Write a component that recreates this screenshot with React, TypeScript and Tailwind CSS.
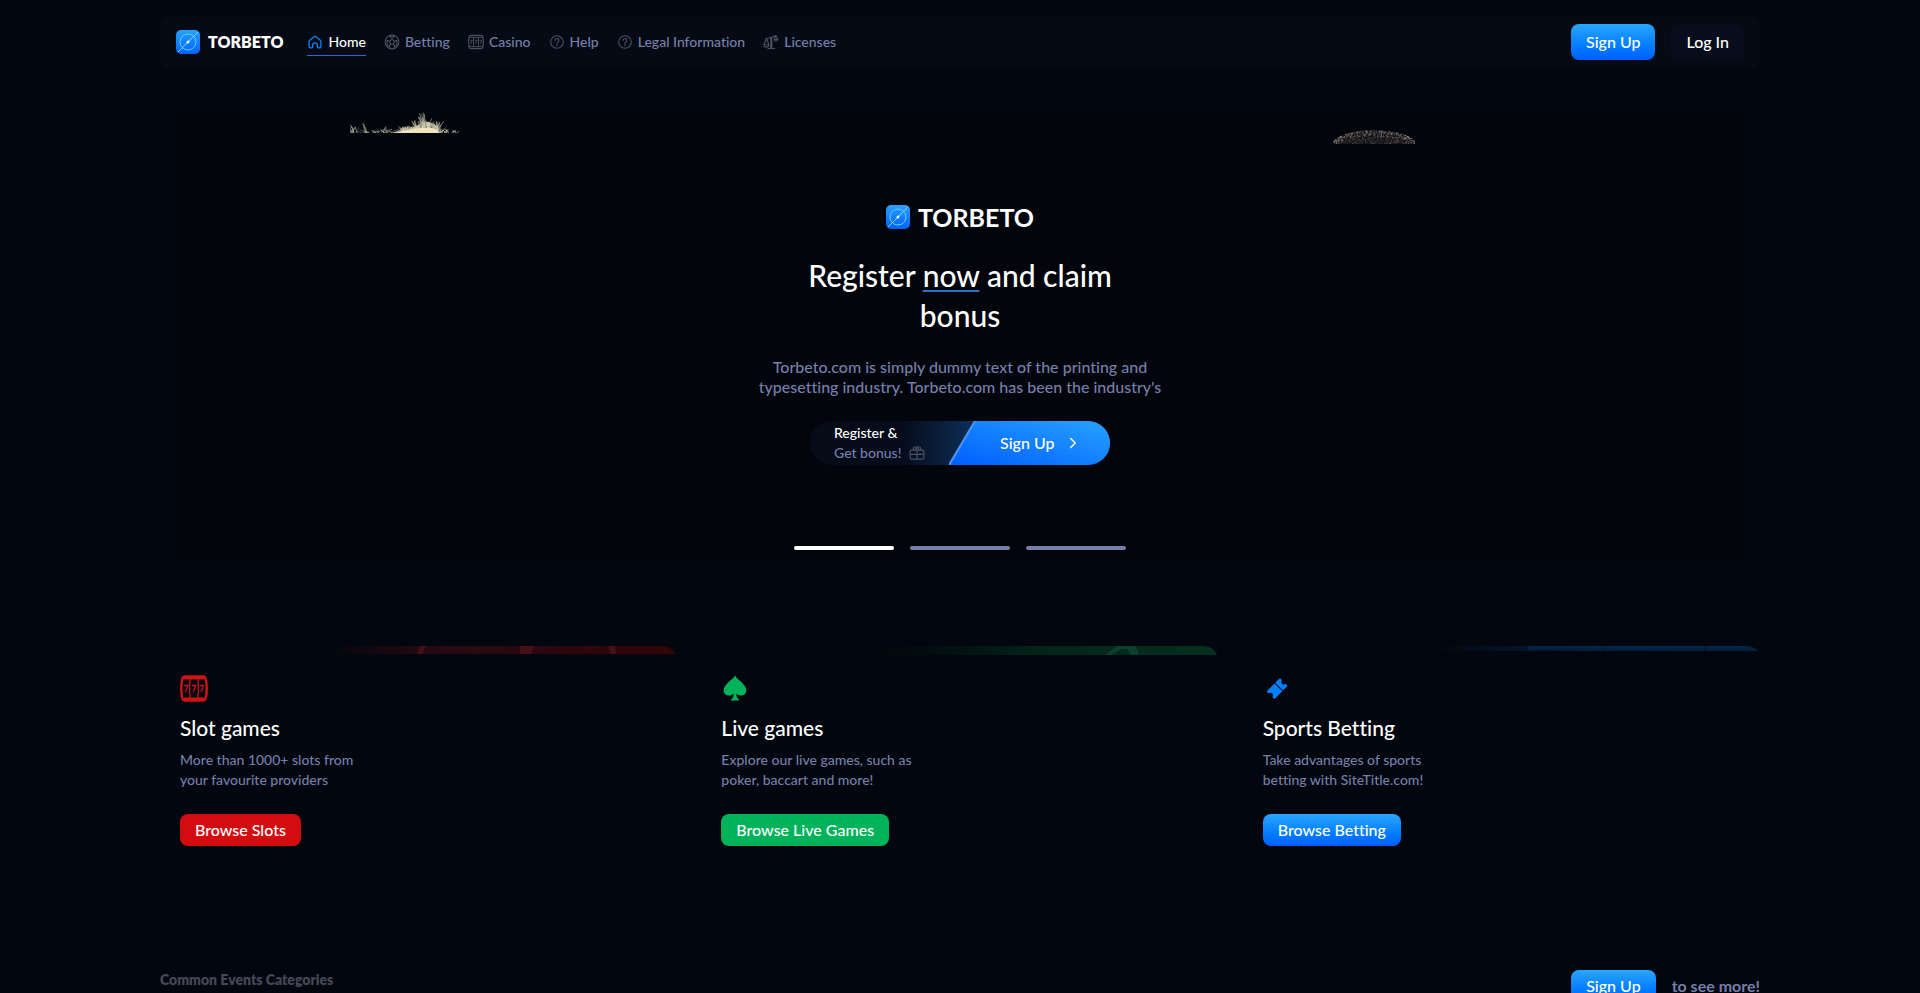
import React, { useState } from "react";
import { ChevronRight } from "lucide-react";

const NAV_ITEMS = [
    { label: "Home", icon: HomeIcon },
    { label: "Betting", icon: BallIcon },
    { label: "Casino", icon: SlotsIcon },
    { label: "Help", icon: HelpIcon },
    { label: "Legal Information", icon: HelpIcon },
    { label: "Licenses", icon: ScaleIcon },
];

const CARDS = [
    {
        title: "Slot games",
        lines: ["More than 1000+ slots from", "your favourite providers"],
        action: "Browse Slots",
        button: "bg-[#d30c10]",
        icon: SlotsBigIcon,
        strip: RedStrip,
    },
    {
        title: "Live games",
        lines: ["Explore our live games, such as", "poker, baccart and more!"],
        action: "Browse Live Games",
        button: "bg-[#00b25a]",
        icon: SpadeIcon,
        strip: GreenStrip,
    },
    {
        title: "Sports Betting",
        lines: ["Take advantages of sports", "betting with SiteTitle.com!"],
        action: "Browse Betting",
        button: "bg-linear-to-b from-[#2aa5ff] to-[#005eff]",
        icon: TicketIcon,
        strip: BlueStrip,
    },
];

function HomeIcon() {
    return (
        <svg width="16" height="16" viewBox="0 0 16 16" fill="none" stroke="#0f83f5" strokeWidth="1.3" strokeLinejoin="round">
            <path d="M2.7 6.3 7 2.7a1.6 1.6 0 0 1 2 0l4.3 3.6c.4.3.6.8.6 1.3v5a1.2 1.2 0 0 1-1.2 1.2h-1.5a.8.8 0 0 1-.8-.8v-1.8a2.4 2.4 0 0 0-4.8 0V13a.8.8 0 0 1-.8.8H3.3a1.2 1.2 0 0 1-1.2-1.2v-5c0-.5.2-1 .6-1.3z" />
        </svg>
    );
}

function BallIcon() {
    return (
        <svg width="16" height="16" viewBox="0 0 16 16" fill="none" stroke="#4b5060" strokeWidth="1.1" strokeLinejoin="round">
            <circle cx="8" cy="8" r="6.9" />
            <path d="M8 5.4 10.5 7.2 9.6 10.2H6.4L5.5 7.2zM8 5.4V3.5M10.5 7.2l2-.7M9.6 10.2l1.3 1.9M6.4 10.2l-1.3 1.9M5.5 7.2l-2-.7M5.2 1.9 8 3.5l2.8-1.6M14.5 6l-2 .5.5 4.500M1.500 6l2 .5L3 11M3 11.800l2.100.3 1.300 2.300M13 11.800l-2.100.3-1.300 2.300" />
        </svg>
    );
}

function SlotsIcon() {
    return (
        <svg width="16" height="16" viewBox="0 0 16 16" fill="none" stroke="#4b5060" strokeWidth="1.2" strokeLinejoin="round">
            <path d="M3 1.300h10c1.200 0 1.700.6 1.900 1.700.5 3.300.5 6.700 0 10-.2 1.100-.7 1.700-1.900 1.700H3c-1.200 0-1.700-.6-1.900-1.700-.5-3.300-.5-6.700 0-10 .2-1.100.7-1.700 1.900-1.700z" />
            <path d="M1 3.300h14M1 12.700h14M5.600 3.300v9.400M10.400 3.300v9.400" strokeWidth="1" />
            <path d="M2.300 6.300h2L3 9.800M7 6.300h2L7.700 9.800M11.700 6.300h2l-1.300 3.500" strokeWidth="0.900" />
        </svg>
    );
}

function HelpIcon() {
    return (
        <svg width="16" height="16" viewBox="0 0 16 16" fill="none" stroke="#4b5060" strokeWidth="1.1" strokeLinecap="round">
            <circle cx="8" cy="8" r="6.3" />
            <path d="M6.100 6.400a1.900 1.900 0 1 1 2.900 1.600c-.7.4-1 .7-1 1.300" />
            <circle cx="8" cy="11.200" r="0.300" />
        </svg>
    );
}

function ScaleIcon() {
    return (
        <svg width="16" height="16" viewBox="0 0 16 16" fill="none" stroke="#4b5060" strokeWidth="1.1" strokeLinecap="round" strokeLinejoin="round">
            <path d="M3 4.500c2.500.3 3.500-.8 4.600-1.100s3 .2 5-1.900M7.800 3.500v10.300M8.800 3.500v10.300M5 14.500h6.600M3.500 4.500.9 10.800h5zM.9 10.800c0 1.500 1 2.300 2.500 2.300s2.500-.8 2.500-2.300M13 1.500l-1.800 4h3.600zM11.200 5.500c0 1 .8 1.500 1.800 1.500s1.800-.5 1.800-1.500" />
        </svg>
    );
}

function SlotsBigIcon() {
    return (
        <svg width="28" height="28" viewBox="0 0 28 28" fill="none" stroke="#cf1417">
            <path d="M5 2.500h18c1.400 0 2.200.7 2.600 2 1.400 6 1.400 14 0 20-.4 1.300-1.200 2-2.600 2H5c-1.400 0-2.200-.7-2.600-2-1.400-6-1.400-14 0-20 .4-1.300 1.200-2 2.600-2z" strokeWidth="2.4" strokeLinejoin="round" />
            <path d="M3.500 4h21M3.500 25h21" strokeWidth="2.8" />
            <path d="M10.300 5c-.8 3-.8 16 0 19M17.700 5c.8 3 .8 16 0 19" strokeWidth="1.3" />
            <path d="M4.300 11.500h3.600L5.300 18M12 11.500h3.800L13.200 18M20 11.500h3.600L21 18" strokeWidth="1.3" />
        </svg>
    );
}

function SpadeIcon() {
    return (
        <svg width="28" height="28" viewBox="0 0 28 28" fill="#00b25a">
            <path d="M14 1.500c1.800 4.200 11.300 8.500 11.300 14.800 0 3.300-2.500 5.300-5.400 5.300-1.900 0-3.500-.8-4.500-2.100 0 3 .7 5.300 2.700 6.100v.9H9.900v-.9c2-.8 2.700-3.100 2.700-6.100-1 1.300-2.600 2.100-4.500 2.100-2.900 0-5.400-2-5.400-5.300C2.700 10 12.200 5.700 14 1.500z" />
        </svg>
    );
}

function TicketIcon() {
    return (
        <svg width="28" height="28" viewBox="0 0 28 28">
            <g transform="rotate(-45 14 14)" fill="#0080ff">
                <path d="M5.200 9H15.500V20H5.200a1 1 0 0 1-1-1v-2a2.500 2.500 0 0 0 0-5v-2a1 1 0 0 1 1-1z" />
                <path d="M16.500 9h5.600a1 1 0 0 1 1 1v2a2.500 2.500 0 0 0 0 5v2a1 1 0 0 1-1 1h-5.600z" />
            </g>
        </svg>
    );
}

function GiftIcon() {
    return (
        <svg width="16" height="16" viewBox="0 0 16 16" fill="none" stroke="#4b5060" strokeWidth="1.2" strokeLinejoin="round">
            <rect x="1.200" y="5.200" width="13.600" height="9" rx="1.200" />
            <path d="M1.200 9.400h13.600M8 5.200v9M4.300 5.200V3.500a1.500 1.500 0 0 1 1.500-1.500h4.400a1.500 1.500 0 0 1 1.500 1.500v1.700M6.400 5.200V4L8 2.500 9.600 4v1.200" />
        </svg>
    );
}

function LogoMark() {
    return (
        <svg width="24" height="24" viewBox="0 0 24 24" fill="none">
            <defs>
                <linearGradient id="mark" x1="0" y1="0" x2="0" y2="1">
                    <stop stopColor="#27a2ff" />
                    <stop offset="1" stopColor="#0062ff" />
                </linearGradient>
            </defs>
            <rect width="24" height="24" rx="5" fill="url(#mark)" />
            <circle cx="12" cy="12" r="8" stroke="#6fc6ff" strokeWidth="1" />
            <path d="M2 22 22 2" stroke="#8ed4ff" strokeWidth="0.9" />
            <path d="m9.500 14.500 1.400-3.200 3.600-1.800-1.600 3.400z" fill="#8ed4ff" />
            <circle cx="12" cy="12" r="1.200" fill="#fff" />
        </svg>
    );
}

// repeatable noise so the drawings stay the same between renders
const noise = (i: number) => {
    const v = Math.sin(i * 127.1 + 3.7) * 43758.5453;
    return v - Math.floor(v);
};

function GrassTip() {
    const colors = ["#efe6c4", "#c9c6a8", "#8d9384", "#e8ddb6", "#5f675f"];
    const height = (x: number) => {
        if (x < 8) return 9;
        if (x > 12 && x < 17) return 12;
        if (x < 28) return 4;
        if (x < 36) return 7;
        if (x < 50) return 4;
        if (x < 66) return 7;
        if (x < 72) return 13;
        if (x < 77) return 21;
        if (x < 90) return 12;
        return x < 94 ? 6 : 4;
    };
    const blades = Array.from({ length: 300 }, (_, i) => {
        const x = i < 110 ? noise(i) * 108 : 50 + noise(i) * 42;
        const h = height(x) * (0.3 + noise(i + 500) * 0.7);
        return { x, h, lean: (noise(i + 900) - 0.5) * 11, color: colors[Math.floor(noise(i + 300) * 5)] };
    });
    return (
        <svg width="110" height="22" viewBox="0 0 110 22" fill="none">
            <path d="M42 22c4-1.500 8-2.500 13-4.500 5-1 10-1 15-4.500l5-3 9 3c4 3 6 6 7 9z" fill="#cfc8a6" />
            {blades.map((b, i) => (
                <path key={i} d={`M${b.x} 22q0 ${-b.h / 2} ${b.lean} ${-b.h}`} stroke={b.color} strokeWidth="0.5" />
            ))}
            <path d="M45 22c6-2 12-3 18-4 8-1 16-2 22 0l5 4z" fill="#efe4bd" />
        </svg>
    );
}

function BallTop() {
    const dots = Array.from({ length: 900 }, (_, i) => {
        const x = noise(i) * 82;
        const top = 15.5 - 14.5 * Math.sqrt(1 - Math.pow((x - 41) / 42, 2));
        const depth = Math.pow(noise(i + 700), 1.3);
        return { x, y: top + depth * (16 - top), o: (0.15 + noise(i + 200) * 0.5) * (1 - depth * 0.6) };
    });
    return (
        <svg width="82" height="15" viewBox="0 0 82 15">
            <path d="M0 16C10 4 26 1 41 1s31 3 41 15z" fill="#131216" />
            {dots.map((d, i) => (
                <rect key={i} x={d.x} y={d.y} width="0.9" height="0.9" fill="#b3a79e" opacity={d.o} />
            ))}
        </svg>
    );
}

function RedStrip() {
    return (
        <svg width="360" height="8" viewBox="0 0 360 8">
            <defs>
                <linearGradient id="red">
                    <stop offset=".03" stopColor="#300a12" stopOpacity="0" />
                    <stop offset=".35" stopColor="#280a14" />
                    <stop offset="1" stopColor="#330509" />
                </linearGradient>
            </defs>
            <path d="M0 0h344c8 0 12 4 14 8H0z" fill="url(#red)" />
            <path d="M103 0h6l-4 8h-5zM203 0h14l-3 8h-11zM291 0h7l1 8h-5z" fill="#461018" />
        </svg>
    );
}

function GreenStrip() {
    return (
        <svg width="360" height="9" viewBox="0 0 360 9">
            <defs>
                <linearGradient id="green">
                    <stop offset=".03" stopColor="#03150f" stopOpacity="0" />
                    <stop offset=".5" stopColor="#042419" />
                    <stop offset="1" stopColor="#04301f" />
                </linearGradient>
            </defs>
            <path d="M0 0h344c8 0 12 4 14 9H0z" fill="url(#green)" />
            <path d="M258 0h19l3 9h-8l-4-6h-6l-9 6h-7z" fill="#0a402d" />
        </svg>
    );
}

function BlueStrip() {
    return (
        <svg width="360" height="5" viewBox="0 0 360 5">
            <defs>
                <linearGradient id="blue">
                    <stop offset=".05" stopColor="#04162b" stopOpacity="0" />
                    <stop offset=".5" stopColor="#041e3b" />
                    <stop offset="1" stopColor="#042140" />
                </linearGradient>
            </defs>
            <path d="M0 0h346c6 0 9 2 12 5H0z" fill="url(#blue)" />
            <path d="M128 0h220l-8 2h-60l-40 1-70-1-42 2z" fill="#062a50" opacity=".7" />
            <path d="M203 0v5M305 0v5" stroke="#021226" />
        </svg>
    );
}

export default function App() {
    const [slide, setSlide] = useState(0);

    return (
        <div className="h-screen overflow-hidden bg-[#02060e] font-['Lato','Open_Sans',sans-serif] text-white [font-variant-ligatures:none]">
            <div className="mx-auto max-w-[1600px] pt-4">
                <header className="flex h-[52px] items-center gap-6 rounded-lg bg-[#050a14] px-4">
                    <a href="#" className="flex items-center gap-2">
                        <LogoMark />
                        <span className="text-base font-extrabold">TORBETO</span>
                    </a>
                    <nav className="flex items-center gap-[18px]">
                        {NAV_ITEMS.map(({ label, icon: Icon }, i) => (
                            <a
                                key={label}
                                href="#"
                                className={
                                    i === 0
                                        ? "flex h-7 items-center gap-[5px] border-b border-[#1b6fd8] text-sm font-medium text-white"
                                        : "flex h-7 items-center gap-[5px] border-b border-transparent text-sm font-medium text-[#757fa9]"
                                }
                            >
                                <Icon />
                                {label}
                            </a>
                        ))}
                    </nav>
                    <div className="ml-auto flex items-center gap-4">
                        <button className="h-9 rounded-lg bg-linear-to-b from-[#2aa5ff] to-[#005eff] px-[15px] text-base font-medium text-white">
                            Sign Up
                        </button>
                        <button className="h-9 rounded-lg bg-[#070d1a] px-[15px] text-base font-medium text-white">Log In</button>
                    </div>
                </header>

                <section className="relative mx-4 mt-[46px] flex h-[446px] flex-col items-center bg-[#02050c] pt-[89px] text-center">
                    <div className="absolute -top-[3px] left-[11.1%]">
                        <GrassTip />
                    </div>
                    <div className="absolute top-[15px] right-[21%]">
                        <BallTop />
                    </div>

                    <div className="flex items-center gap-2">
                        <LogoMark />
                        <span className="text-[25px] leading-7 font-bold">TORBETO</span>
                    </div>
                    <h1 className="mt-6 w-80 text-3xl leading-10 font-medium">
                        Register <span className="underline decoration-[#2c72c9] decoration-2 underline-offset-[3px]">now</span> and claim bonus
                    </h1>
                    <p className="mt-[22px] w-[420px] text-base leading-5 font-medium text-[#757fa9]">
                        Torbeto.com is simply dummy text of the printing and typesetting industry. Torbeto.com has been the industry's
                    </p>
                    <div className="relative mt-6 flex h-11 w-[300px] shrink-0 overflow-hidden rounded-full bg-linear-to-r from-[#060b18] via-[#060b1a] via-30% to-[#0d2f5a] to-55%">
                        <svg className="absolute inset-y-0 right-0" width="161" height="44" viewBox="0 0 161 44">
                            <defs>
                                <linearGradient id="cta" x1="0" y1="1" x2="1" y2="0">
                                    <stop stopColor="#005eff" />
                                    <stop offset="1" stopColor="#27a2ff" />
                                </linearGradient>
                            </defs>
                            <path d="M26 0h135v44H0z" fill="url(#cta)" />
                            <path d="M26 0 0 44" stroke="#4f97f5" strokeWidth="2" />
                        </svg>
                        <div className="pt-[2px] pl-6 text-left text-sm leading-5 font-medium">
                            <div>Register &amp;</div>
                            <div className="flex items-center gap-2 text-[#757fa9]">
                                Get bonus! <GiftIcon />
                            </div>
                        </div>
                        <button className="absolute inset-y-0 right-0 flex w-[134px] items-center gap-2.5 pl-6 text-base font-medium">
                            Sign Up <ChevronRight size={18} strokeWidth={2} />
                        </button>
                    </div>
                    <div className="mt-auto mb-2.5 flex gap-4">
                        {[0, 1, 2].map((n) => (
                            <button
                                key={n}
                                aria-label={`Slide ${n + 1}`}
                                onClick={() => setSlide(n)}
                                className={n === slide ? "h-1 w-[100px] rounded-full bg-white" : "h-1 w-[100px] rounded-full bg-[#757fa9]"}
                            />
                        ))}
                    </div>
                </section>

                <section className="mt-[86px] grid grid-cols-3 gap-6">
                    {CARDS.map(({ title, lines, action, button, icon: Icon, strip: Strip }) => (
                        <article key={title} className="relative flex flex-col items-start px-5 pt-7">
                            <div className="absolute top-0 right-0">
                                <Strip />
                            </div>
                            <Icon />
                            <h2 className="mt-3 text-[21px] leading-7 font-medium">{title}</h2>
                            <p className="mt-2 text-sm leading-5 font-medium text-[#757fa9]">
                                {lines[0]}
                                <br />
                                {lines[1]}
                            </p>
                            <button className={`mt-6 h-8 rounded-lg px-[15px] text-base font-medium text-white ${button}`}>{action}</button>
                        </article>
                    ))}
                </section>

                <section className="mt-[124px] flex items-start justify-between">
                    <h3 className="text-sm leading-5 font-extrabold text-[#434859]">Common Events Categories</h3>
                    <div className="flex items-center gap-4">
                        <button className="h-8 rounded-lg bg-linear-to-b from-[#2aa5ff] to-[#005eff] px-[15px] text-base font-medium text-white">
                            Sign Up
                        </button>
                        <span className="text-base font-bold text-[#757fa9]">to see more!</span>
                    </div>
                </section>
            </div>
        </div>
    );
}
